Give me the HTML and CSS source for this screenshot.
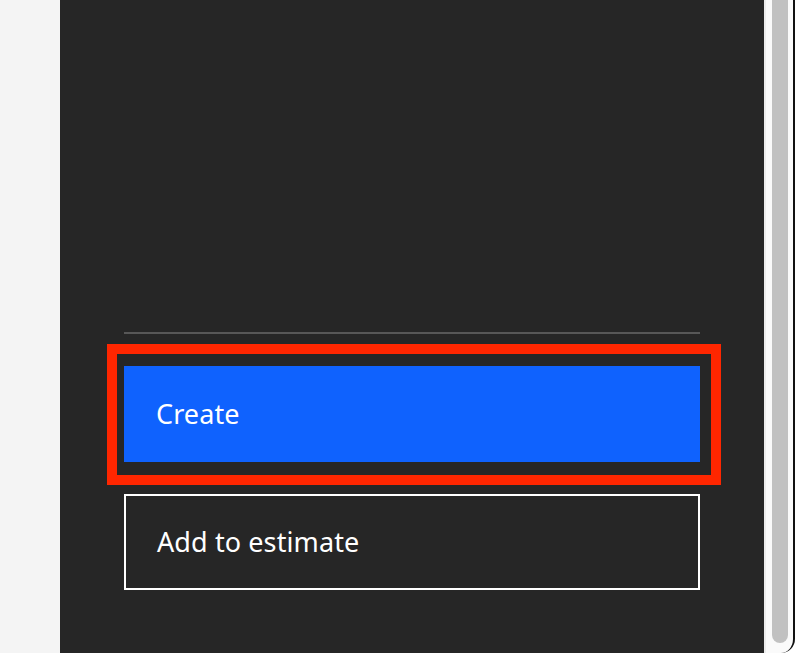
FILE: index.html
```html
<html>
<head>
    <link rel="stylesheet" href="styles.css">
</head>
<body>
<div class="page">
    <div class="gutter"></div>
    <div class="panel">
        <div class="actions">
            <div class="divider"></div>
            <button class="btn btn-primary">Create</button>
            <button class="btn btn-tertiary">Add to estimate</button>
        </div>
        <div class="highlight"></div>
    </div>
    <div class="scrollbar">
        <div class="thumb"></div>
    </div>
</div>
</body>
</html>
```

FILE: styles.css
```css
* {
    box-sizing: border-box;
}
html, body {
    margin: 0;
    padding: 0;
    height: 100%;
    overflow: hidden;
}
.page {
    display: flex;
    height: 653px;
    font-family: "Noto Sans", "Liberation Sans", sans-serif;
}
.gutter {
    width: 60px;
    flex-shrink: 0;
    background: #f4f4f4;
}
.panel {
    position: relative;
    flex: 1;
    background: #262626;
    display: flex;
    flex-direction: column;
    justify-content: flex-end;
    padding: 0 64px 63px 64px;
}
.actions {
    display: flex;
    flex-direction: column;
}
.divider {
    height: 2px;
    background: #575757;
    margin-bottom: 32px;
}
.btn {
    height: 96px;
    border: none;
    padding: 0 32px 2px 32px;
    text-align: left;
    font-family: inherit;
    font-size: 27px;
    letter-spacing: 0.1px;
    color: #ffffff;
    cursor: pointer;
}
.btn-primary {
    background: #0f62fe;
    margin-bottom: 32px;
}
.btn-tertiary {
    background: transparent;
    border: 2px solid #ffffff;
    padding-left: 31px;
}
.highlight {
    position: absolute;
    left: 47px;
    top: 344px;
    width: 614px;
    height: 141px;
    border: 10px solid #ff2600;
}
.scrollbar {
    width: 31px;
    flex-shrink: 0;
    background: #fafafa;
    border-left: 2px solid #ececec;
    border-right: 2px solid #111111;
    border-bottom-right-radius: 14px;
    padding-left: 6px;
}
.thumb {
    width: 16px;
    height: 643px;
    background: #c1c1c1;
    border-radius: 0 0 8px 8px;
}
```
